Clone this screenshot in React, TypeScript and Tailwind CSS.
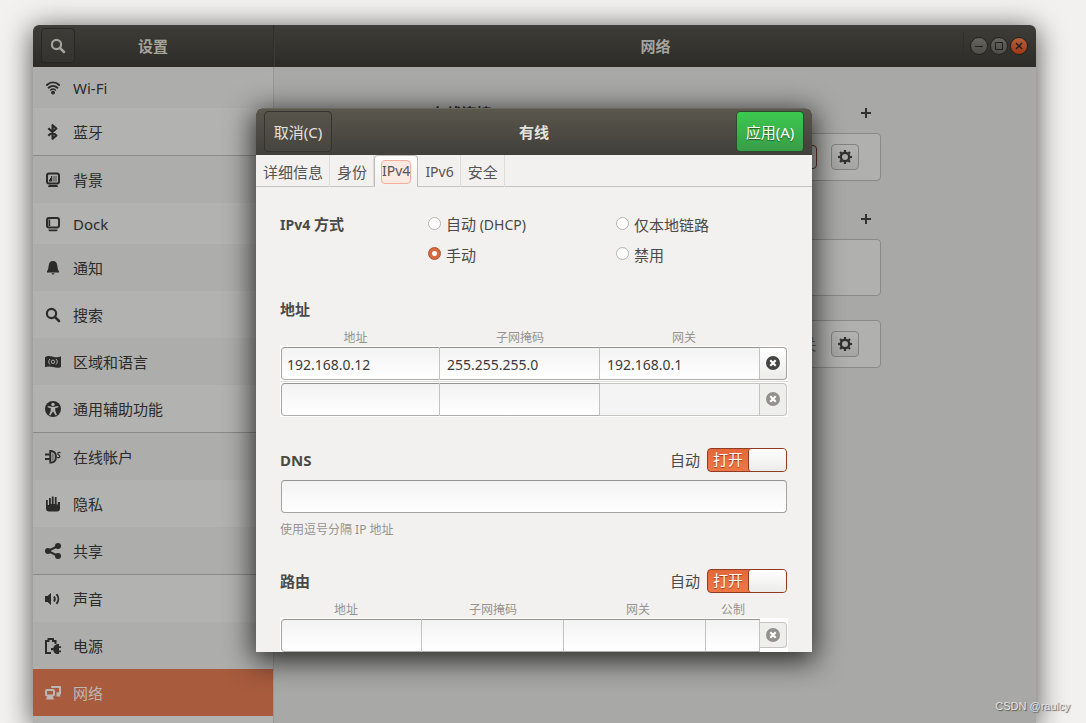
import React from "react";

const font =
  "font-['Noto_Sans','Noto_Sans_CJK_SC',sans-serif] text-[15px] leading-5";

function Icon({ children, size = "size-4" }: { children: React.ReactNode; size?: string }) {
  return (
    <svg viewBox="0 0 16 16" className={`${size} shrink-0`} fill="currentColor" aria-hidden="true">
      {children}
    </svg>
  );
}

const SearchShape = (
  <>
    <circle cx="6.5" cy="6.5" r="4.6" fill="none" stroke="currentColor" strokeWidth="2.1" />
    <path d="M9.8 9.8 14 14" stroke="currentColor" strokeWidth="2.5" strokeLinecap="round" />
  </>
);

const icons = {
  wifi: (
    <g fill="none" stroke="currentColor" strokeWidth="1.9" strokeLinecap="round">
      <path d="M1.900 5C5.200 1.500 10.800 1.500 14.100 5" />
      <path d="M3.600 7.700c2.600-2.400 6.200-2.400 8.800 0" />
      <path d="M5.600 10c1.500-1.200 3.300-1.200 4.800 0" strokeWidth="1.600" />
      <circle cx="8" cy="12.600" r="1.500" fill="currentColor" strokeWidth="1" />
    </g>
  ),
  bluetooth: (
    <path
      d="M3.300 4.300 11.300 11.500 7.600 14.800V1.200L11.300 4.500 3.300 11.700"
      fill="none"
      stroke="currentColor"
      strokeWidth="2.200"
      strokeLinejoin="round"
    />
  ),
  background: (
    <>
      <rect x="2" y="1.5" width="12" height="10" rx="2" fill="none" stroke="currentColor" strokeWidth="2" />
      <rect x="7.5" y="4" width="4.5" height="5.5" opacity=".4" />
      <path d="M4 9.5V7.5h1V6h1V4h1v5.5zM4.5 13h7q1.5 0 1.5 2H3q0-2 1.500-2z" />
    </>
  ),
  dock: (
    <>
      <rect x="2" y="2" width="12" height="9.5" rx="2" fill="none" stroke="currentColor" strokeWidth="2" />
      <path d="M3.500 3.500h1.700v6.500H3.500zM3.500 13.500h9v1l-1 .8h-7l-1-.8z" />
    </>
  ),
  bell: (
    <path d="M8 1c-2.800 0-4 2-4.300 4.500C3.400 8.500 3 10 2 11.200V12.500h12v-1.300c-1-1.200-1.400-2.700-1.700-5.700C12 3 10.800 1 8 1zM6.500 13.300h3c-.2 1-.8 1.200-1.500 1.200s-1.300-.2-1.500-1.200z" />
  ),
  search: SearchShape,
  region: (
    <>
      <path d="M0 3.200c2.500-1.800 5-1.200 8-.5s5.500.9 8-.4V13c-2.500 1.300-5 .9-8 .1S2.500 12 0 13.200z" />
      <g className="stroke-[#adadac]" fill="none">
        <circle cx="8" cy="7.800" r="1.700" />
        <path d="M5 5c-1.700 1.500-1.700 4 0 5.500M11 5c1.700 1.500 1.700 4 0 5.500" />
      </g>
    </>
  ),
  access: (
    <>
      <circle cx="8" cy="8" r="8" />
      <g className="fill-[#b2b2b1]">
        <circle cx="8" cy="3.400" r="1.700" />
        <path d="M2.800 5l4 .7h2.400l4-.7.2 1.200-3.200 1v2.200l1.700 4.500-1.300.6L8.300 10.700h-.6L5.400 14.500l-1.300-.6 1.700-4.500V7.200l-3.200-1z" />
      </g>
    </>
  ),
  accounts: (
    <>
      <path d="M0 4.500h5v2H0zM0 9h5v2H0z" />
      <path d="M5.200 2h1c3.600.5 4.800 3 4.800 5.900s-1.200 5.200-4.800 5.700h-1z" fill="none" stroke="currentColor" strokeWidth="1.800" />
      <path d="M6.500 4v8c2-.5 3-2 3-4s-1-3.500-3-4z" opacity=".35" />
      <path d="M15.500 3.800c-2-.9-3 .1-2.700 1.300.3 1 2.200.9 2.100 2.300-.1 1.300-1.700 1.600-3 .9" fill="none" stroke="currentColor" strokeWidth="1.200" />
    </>
  ),
  hand: (
    <path d="M1 4h1.800v5h1.200V2h1.800v6h1V.5h1.800V8h1.200V1h1.800v7.500h1.200V6H15v6.500C15 14.500 14 15.500 12 15.500H4C2 15.500 1 14.500 1 12.500z" />
  ),
  share: (
    <>
      <path d="M13 3 3 8l10 5" fill="none" stroke="currentColor" strokeWidth="2" />
      <circle cx="3" cy="8" r="3" />
      <circle cx="13" cy="3" r="3" />
      <circle cx="13" cy="13" r="3" />
    </>
  ),
  sound: (
    <>
      <path d="M0 5h2.500L6 2v12l-3.500-3H0z" />
      <path d="M9 5.500c1 1.500 1 3.500 0 5M11.500 3.200c2.400 2.800 2.400 6.800 0 9.600" fill="none" stroke="currentColor" strokeWidth="1.900" />
    </>
  ),
  power: (
    <>
      <path d="M6 15H1V3h2.500V1H8v2h2.500v3" fill="none" stroke="currentColor" strokeWidth="2" />
      <path d="M6 10h2.300c.5-2 1.700-3.200 3.200-3.500V6H14v2.300h2v1.700h-2v2.500h2v1.700h-2V16h-2.500c-1.800-.3-2.900-1.800-3.200-3.700H6z" />
    </>
  ),
  network: (
    <>
      <rect x="1" y="5" width="8" height="5.500" rx="1" fill="none" stroke="currentColor" strokeWidth="2" />
      <path d="M2.500 11h5l1.500 3.500H1z" />
      <path d="M7 2.800V2h8v6.500h-2.500" fill="none" stroke="currentColor" strokeWidth="2" />
      <path d="M11.500 7.500H14l1.500 4h-4z" />
    </>
  ),
};

type Item = { icon: keyof typeof icons; label: string; latin?: boolean; end?: boolean; active?: boolean };

const items: Item[] = [
  { icon: "wifi", label: "Wi-Fi", latin: true },
  { icon: "bluetooth", label: "蓝牙", end: true },
  { icon: "background", label: "背景" },
  { icon: "dock", label: "Dock", latin: true },
  { icon: "bell", label: "通知" },
  { icon: "search", label: "搜索" },
  { icon: "region", label: "区域和语言" },
  { icon: "access", label: "通用辅助功能", end: true },
  { icon: "accounts", label: "在线帐户" },
  { icon: "hand", label: "隐私" },
  { icon: "share", label: "共享", end: true },
  { icon: "sound", label: "声音" },
  { icon: "power", label: "电源" },
  { icon: "network", label: "网络", active: true },
];

function Sidebar() {
  return (
    <nav className="w-[241px] shrink-0 border-r border-[#989896] bg-[#b2b2b1] text-[#2b2b2a]">
      {items.map((it, i) => (
        <a
          key={it.label}
          href="#"
          className={[
            "flex items-center gap-3 px-3",
            it.latin ? "h-[41px]" : it.end ? "h-12 border-b border-[#898987]" : "h-[47px]",
            it.active ? "bg-[#a85b3d] text-[#bdb6b2]" : i % 2 === 0 ? "bg-[#adadac]" : "bg-[#b2b2b1]",
          ].join(" ")}
        >
          <Icon>{icons[it.icon]}</Icon>
          <span>{it.label}</span>
        </a>
      ))}
    </nav>
  );
}

function WindowButton({ label, close, children }: { label: string; close?: boolean; children: React.ReactNode }) {
  return (
    <button
      aria-label={label}
      className={`flex size-[18px] items-center justify-center rounded-full border border-[#24231f] text-[#22211e] ${
        close ? "bg-linear-to-b from-[#b4603f] to-[#a13610]" : "bg-linear-to-b from-[#66655f] to-[#4d4c47]"
      }`}
    >
      <svg viewBox="0 0 16 16" className="size-4 shrink-0" fill="none" stroke="currentColor" aria-hidden="true">
        {children}
      </svg>
    </button>
  );
}

function TitleBar() {
  return (
    <header className="flex h-[42px] shrink-0 rounded-t-md bg-linear-to-b from-[#3e3d37] to-[#2c2b27] font-bold text-[#a5a39c]">
      <div className="grid w-[241px] shrink-0 grid-cols-[34px_1fr_34px] items-center border-r border-[#302f2b] px-2">
        <button
          aria-label="搜索"
          className="mb-px flex h-[35px] items-center justify-center rounded border border-[#282723] bg-linear-to-b from-[#3d3c37] to-[#34332f]"
        >
          <Icon>{SearchShape}</Icon>
        </button>
        <h1 className="text-center">设置</h1>
      </div>
      <div className="grid flex-1 grid-cols-[73px_1fr_73px] items-center border-l border-[#3c3b36]">
        <h2 className="col-start-2 text-center">网络</h2>
        <div className="flex h-7 items-center gap-0.5 border-l border-[#302f2b] pl-1.5">
          <WindowButton label="最小化"><path d="M4 8.500h8" /></WindowButton>
          <WindowButton label="最大化"><path d="M4.500 4.500h7v7h-7z" /></WindowButton>
          <WindowButton label="关闭" close><path d="m5 5 6 6m0-6-6 6" strokeWidth="1.500" /></WindowButton>
        </div>
      </div>
    </header>
  );
}

function GearButton() {
  const teeth = [0, 45, 90, 135, 180, 225, 270, 315];
  return (
    <button
      aria-label="选项"
      className="flex h-[26px] w-7 items-center justify-center rounded border border-[#82827f] bg-linear-to-b from-[#b2b2b0] to-[#a5a5a3] text-[#31312f]"
    >
      <Icon>
        <circle cx="8" cy="8" r="4.200" fill="none" stroke="currentColor" strokeWidth="2.400" />
        {teeth.map((t) => (
          <rect key={t} x="6.900" y="1" width="2.200" height="3" transform={`rotate(${t} 8 8)`} />
        ))}
      </Icon>
    </button>
  );
}

function AddButton() {
  return (
    <button aria-label="添加" className="flex w-[30px] justify-center text-[#31312f]">
      <Icon>
        <path d="M7 3h2v4h4v2H9v4H7V9H3V7h4z" />
      </Icon>
    </button>
  );
}

const card = "flex items-center justify-end gap-3.5 rounded-sm border border-[#898986] bg-[#b0b0af] pr-[21px]";

function NetworkPage() {
  return (
    <main className="flex flex-1 justify-center bg-[#a8a8a6] text-[#2b2b2a]">
      <div className="w-[451px] pt-9">
        <div className="flex h-5 items-center justify-between pl-0.5">
          <h3 className="font-bold">有线连接</h3>
          <AddButton />
        </div>
        <section className={`${card} mt-2.5 h-12`}>
          <span className="h-6 w-20 rounded border border-[#65301d] bg-[#b0b0af]" />
          <GearButton />
        </section>
        <div className="mt-7 flex h-5 items-center justify-end">
          <AddButton />
        </div>
        <section className={`${card} mt-2.5 h-[57px]`} />
        <section className={`${card} mt-6 h-12`}>
          <span className="text-[#62625f]">关</span>
          <GearButton />
        </section>
      </div>
    </main>
  );
}

function Tabs() {
  const idle = "flex h-8 items-center border-r border-[#deddda] pl-[7px] pr-1.5 pt-0.5";
  return (
    <div role="tablist" className="flex h-8 border-b border-[#c5c3c0] text-[#555552]">
      <button role="tab" className={idle}>详细信息</button>
      <button role="tab" className={idle}>身份</button>
      <button
        role="tab"
        aria-selected="true"
        className="flex h-8 items-center rounded-t border border-b-0 border-[#bdbbb8] bg-linear-to-b from-white to-[#f2f1ef] px-1.5"
      >
        <span className="flex h-6 items-center rounded border border-[#f2b09a] bg-[#fbe9e2] pb-0.5 text-sm">IPv4</span>
      </button>
      <button role="tab" className={`${idle} text-sm`}>IPv6</button>
      <button role="tab" className={idle}>安全</button>
    </div>
  );
}

function Radio({ label, note, checked }: { label: string; note?: string; checked?: boolean }) {
  return (
    <label className="flex items-center gap-[5px]">
      <input
        type="radio"
        name="method"
        defaultChecked={checked}
        className="mb-[3px] size-[13px] appearance-none rounded-full border border-[#b5b3b0] bg-white checked:border-[#a9502e] checked:bg-[radial-gradient(circle,#fff_2px,#d9693f_3px)]"
      />
      <span>
        {label}
        {note && <span className="text-sm leading-5"> {note}</span>}
      </span>
    </label>
  );
}

function AutoSwitch({ id }: { id: string }) {
  return (
    <div className="flex items-center gap-[7px]">
      <label htmlFor={id}>自动</label>
      <button
        id={id}
        role="switch"
        aria-checked="true"
        className="flex h-6 w-20 items-stretch rounded border border-[#8f3c20] bg-linear-to-b from-[#e4673a] to-[#ef7747]"
      >
        <span className="flex-1 text-center text-white [text-shadow:0_1px_1px_rgba(120,40,10,.7)]">打开</span>
        <span className="w-[38px] rounded-[3px] border-l border-[#8f3c20] bg-linear-to-b from-white to-[#ebebea]" />
      </button>
    </div>
  );
}

function DeleteButton({ disabled, short }: { disabled?: boolean; short?: boolean }) {
  return (
    <button
      aria-label="删除"
      disabled={disabled}
      className={`flex justify-center rounded-r border border-l-0 ${short ? "mt-[3px] h-[26px] pt-[5px]" : "h-[33px] pt-2"} ${
        disabled
          ? "border-[#c6c4c1] bg-[#eeeeed] text-[#93918c]"
          : "border-[#a3a19e] bg-linear-to-b from-white to-[#ececeb] text-[#444441]"
      }`}
    >
      <svg viewBox="0 0 14 14" className="size-3.5" aria-hidden="true">
        <circle cx="7" cy="7" r="7" fill="currentColor" />
        <path d="m4.300 4.300 5.400 5.400m0-5.400L4.300 9.700" stroke="#fff" strokeWidth="2.200" />
      </svg>
    </button>
  );
}

const cell =
  "h-[33px] w-full min-w-0 border-y border-r border-t-[#939391] border-b-[#aeaeac] border-r-[#c2c2c0] bg-linear-to-b from-[#f3f3f3] to-white px-[7px] pt-0.5 text-sm text-[#3b3b39] first:rounded-l first:border-l first:border-l-[#a3a3a1] first:px-[5px] disabled:border-y-[#c6c4c1] disabled:from-[#f4f4f4] disabled:to-[#f4f4f4]";

const caption = "text-center text-xs leading-4 text-[#96948f]";

function AddressRow({ values, last }: { values: string[]; last?: boolean }) {
  const names = ["地址", "子网掩码", "网关"];
  return (
    <div className="grid grid-cols-[159fr_160fr_160fr_27px]">
      {values.map((v, i) => (
        <input key={i} aria-label={names[i]} defaultValue={v} disabled={last && i === 2} className={cell} />
      ))}
      <DeleteButton disabled={last} />
    </div>
  );
}

function Dialog() {
  return (
    <div
      role="dialog"
      aria-label="有线"
      className="flex max-h-[544px] w-[556px] flex-col overflow-hidden rounded-t-md bg-[#f2f1ef] text-[#4a4a48] shadow-[0_6px_28px_3px_rgba(0,0,0,0.75)]"
    >
      <header className="grid h-[47px] shrink-0 grid-cols-[68px_1fr_68px] items-center border-t border-[#6a675c] bg-linear-to-b from-[#5a574d] to-[#403f3a] px-2 text-[#e4e2dc]">
        <button className="mb-px h-[41px] rounded border border-[#35342f] bg-linear-to-b from-[#57544b] to-[#47453f] pt-px">取消(C)</button>
        <h2 className="text-center font-bold">有线</h2>
        <button className="mb-px h-[41px] rounded border border-[#2d4a2f] bg-linear-to-b from-[#3cc94f] to-[#389d47] pt-px text-white [text-shadow:0_1px_1px_rgba(0,0,0,.5)]">
          应用(A)
        </button>
      </header>
      <Tabs />
      <form className="px-6 pt-[27px]">
        <div className="grid grid-cols-[148fr_188fr_172fr] gap-y-2.5">
          <span className="font-bold"><span className="text-sm leading-5">IPv4</span> 方式</span>
          <Radio label="自动" note="(DHCP)" />
          <Radio label="仅本地链路" />
          <span />
          <Radio label="手动" checked />
          <Radio label="禁用" />
        </div>

        <h3 className="mt-[34px] font-bold">地址</h3>
        <div className={`mt-[11px] grid grid-cols-[151fr_178fr_150fr_29fr] ${caption}`}>
          <span>地址</span>
          <span>子网掩码</span>
          <span>网关</span>
        </div>
        <div>
          <div className="border-b border-[#dcdbd9] bg-white p-px">
            <AddressRow values={["192.168.0.12", "255.255.255.0", "192.168.0.1"]} />
          </div>
          <div className="bg-white p-px">
            <AddressRow values={["", "", ""]} last />
          </div>
        </div>

        <div className="mt-[31px] flex items-center justify-between pr-px">
          <h3 className="font-bold">DNS</h3>
          <AutoSwitch id="dns-auto" />
        </div>
        <div className="mt-2 px-px">
          <input
            aria-label="DNS"
            className="block h-[33px] w-full rounded border border-[#a3a3a1] border-t-[#939391] bg-linear-to-b from-[#f3f3f3] to-white px-[5px] text-sm"
          />
        </div>
        <p className="mt-[9px] text-xs leading-4 text-[#96948f]">使用逗号分隔 IP 地址</p>

        <div className="mt-[31px] flex items-center justify-between pr-px">
          <h3 className="font-bold">路由</h3>
          <AutoSwitch id="route-auto" />
        </div>
        <div className={`mt-[9px] grid grid-cols-[132fr_162fr_128fr_62fr_24fr] ${caption}`}>
          <span>地址</span>
          <span>子网掩码</span>
          <span>网关</span>
          <span>公制</span>
        </div>
        <div className="grid grid-cols-[141fr_142fr_142fr_54fr_27px] bg-white p-px">
          <input aria-label="地址" className={cell} />
          <input aria-label="子网掩码" className={cell} />
          <input aria-label="网关" className={cell} />
          <input aria-label="公制" className={cell} />
          <DeleteButton disabled short />
        </div>
      </form>
    </div>
  );
}

export default function App() {
  return (
    <div className={`${font} relative flex h-screen flex-col overflow-hidden bg-[#f2f1ef] pl-[33px] pr-[50px] pt-[25px]`}>
      <div className="relative flex min-h-0 flex-1 flex-col rounded-t-md shadow-[0_4px_28px_1px_rgba(0,0,0,0.65)]">
        <TitleBar />
        <div className="flex min-h-0 flex-1 overflow-hidden">
          <Sidebar />
          <NetworkPage />
        </div>
        <div className="absolute inset-x-0 top-[83px] flex justify-center pr-px">
          <Dialog />
        </div>
      </div>
      <div className="absolute bottom-[9px] right-4 font-['Liberation_Sans',sans-serif] text-[11px] leading-4 text-[#e2e2e2] [text-shadow:1px_1px_1px_#555]">
        CSDN @raulcy
      </div>
    </div>
  );
}
